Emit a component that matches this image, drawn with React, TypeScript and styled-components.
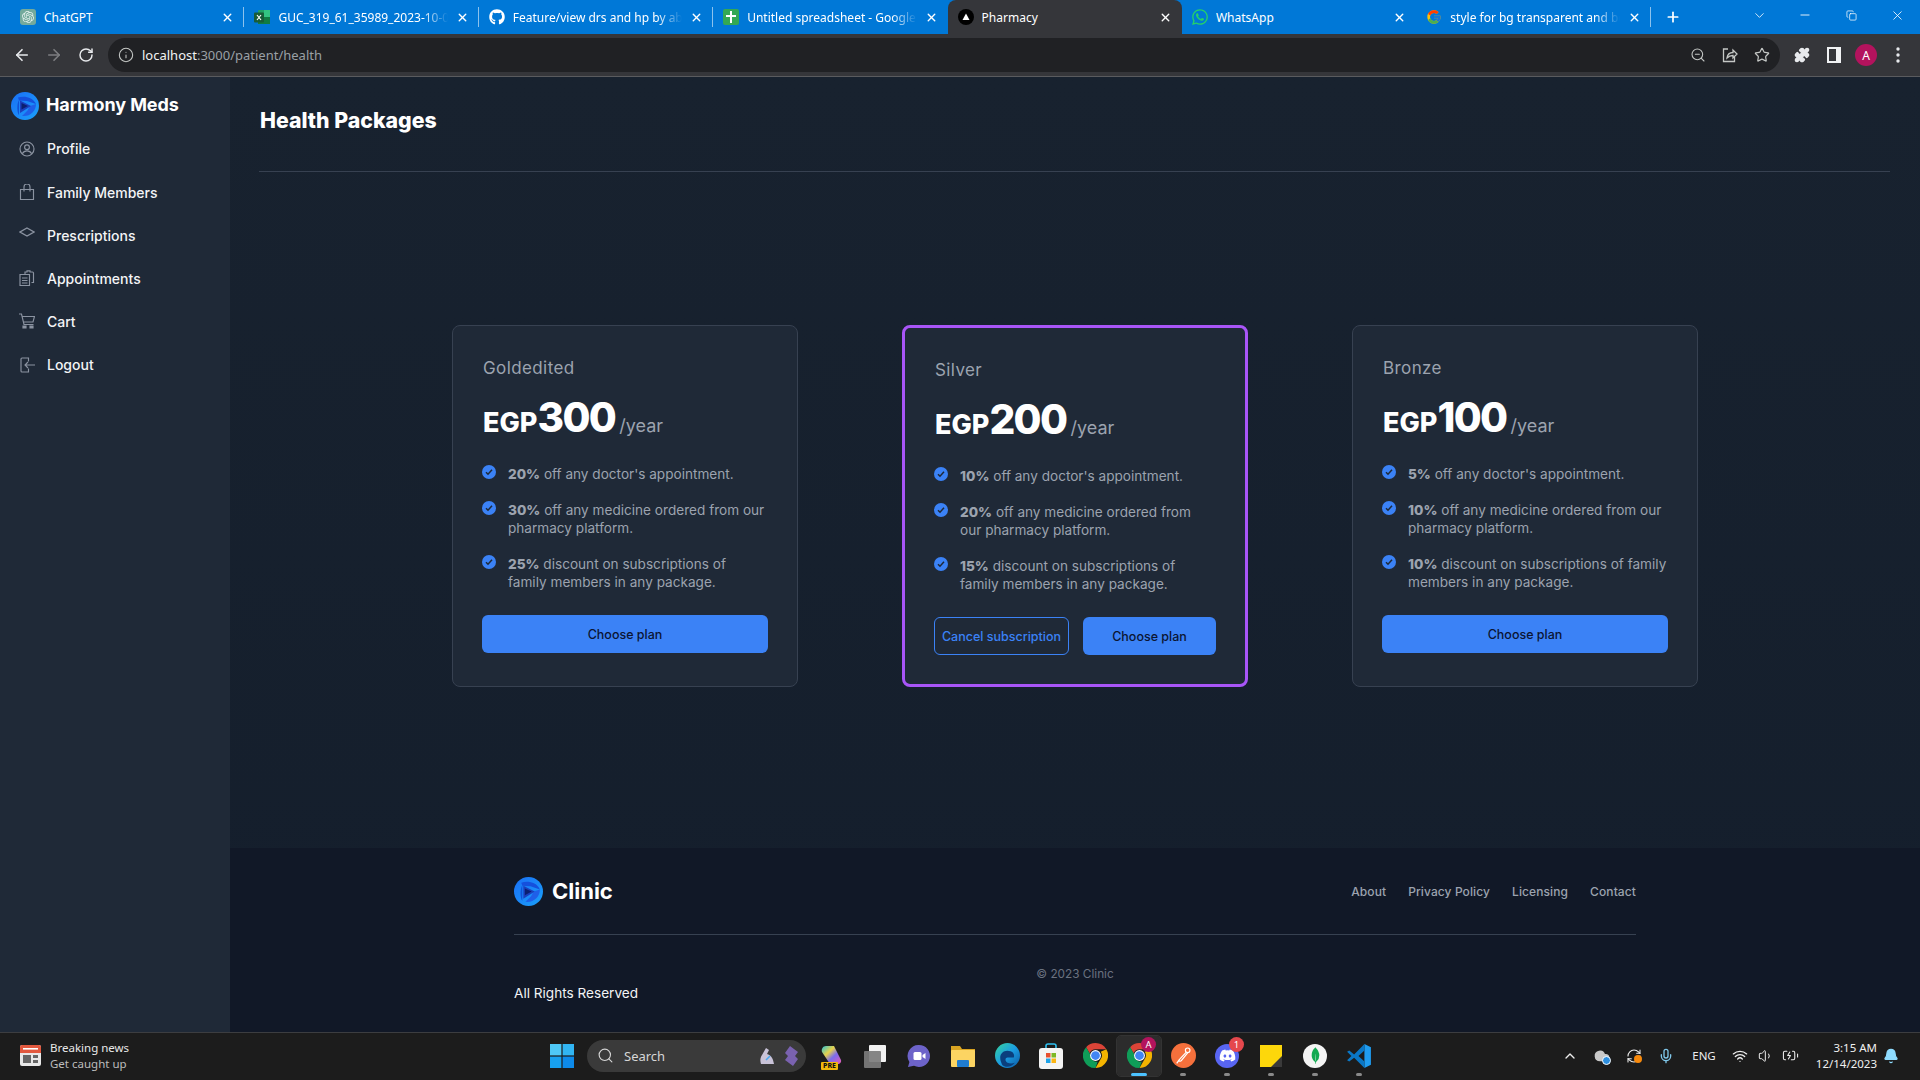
import React from "react";
import styled, { createGlobalStyle } from "styled-components";
import {
  ArrowLeft, ArrowRight, RotateCw, Info, ZoomOut, Star, Puzzle, X, Plus, ChevronDown, ChevronUp,
  Minus, Copy, Search, Mic, Wifi, Volume1, BatteryCharging, Bell, RefreshCw, Cloud,
} from "lucide-react";
import { FaGithub, FaWhatsapp, FaDiscord } from "react-icons/fa";
import { FcGoogle } from "react-icons/fc";
import { SiOpenai, SiMongodb } from "react-icons/si";

const UI = `"Inter", "Liberation Sans", sans-serif`;
const SYS = `"Noto Sans", "Open Sans", sans-serif`;

const Global = createGlobalStyle`
  html, body { margin: 0; padding: 0; background: #111827; overflow: hidden; }
  * { box-sizing: border-box; }
  #root { width: 1920px; height: 1080px; }
`;

const Screen = styled.div`
  width: 1920px; height: 1080px; display: flex; flex-direction: column; font-family: ${UI};
`;

/* Browser chrome */
const TabStrip = styled.div`
  height: 34px; flex: none; background: #0078d7; display: flex; padding-left: 10px; font-family: ${SYS};
`;
const Tab = styled.div<{ $active?: boolean; $sep?: boolean }>`
  position: relative; flex: 0 0 234.4px; width: 234.4px; height: 34px; display: flex; align-items: center; gap: 8px;
  padding: 0 10px; color: #fff; font-size: 12px;
  ${(p) => p.$active && `background: #35363a; border-radius: 8px 8px 0 0;`}
  ${(p) => p.$sep && `&::after { content: ""; position: absolute; right: 0; top: 7px; height: 20px; width: 1px; background: rgba(255,255,255,.55); }`}
`;
const TabIcon = styled.span`
  width: 16px; height: 16px; flex: none; display: flex; align-items: center; justify-content: center;
`;
const TabTitle = styled.span<{ $fade?: boolean }>`
  flex: 1; min-width: 0; white-space: nowrap; overflow: hidden;
  ${(p) => p.$fade && `mask-image: linear-gradient(90deg, #000 85%, transparent 100%);`}
`;
const TabClose = styled(X)`
  width: 13px; height: 13px; flex: none; color: #fff; stroke-width: 2.6;
`;
const GptFav = styled.span`
  width: 16px; height: 16px; border-radius: 3px; background: #74aa9c; color: #e8f3f0;
  display: flex; align-items: center; justify-content: center;
`;
const SheetFav = styled.span`
  width: 16px; height: 16px; border-radius: 2px; background: #34a853; color: #fff; position: relative; display: block;
  &::before { content: ""; position: absolute; left: 7px; top: 2px; width: 2px; height: 12px; background: #fff; }
  &::after { content: ""; position: absolute; left: 3px; top: 6px; width: 10px; height: 2px; background: #fff; }
`;
const NewTab = styled.span`
  width: 22px; height: 34px; margin-left: 11px; flex: none; display: flex; align-items: center; justify-content: center; color: #fff;
`;
const WindowControls = styled.div`
  margin-left: auto; display: flex; align-items: center; color: #fff; padding-bottom: 4px;
`;
const WinBtn = styled.span`
  width: 46px; height: 30px; display: flex; align-items: center; justify-content: center; color: #fff;
`;

const Toolbar = styled.div`
  height: 43px; flex: none; background: #35363a; border-bottom: 1px solid #5a5b5e; display: flex; align-items: center; padding: 0 6px;
`;
const NavBtn = styled.span<{ $dim?: boolean }>`
  width: 32px; height: 32px; flex: none; display: flex; align-items: center; justify-content: center;
  color: ${(p) => (p.$dim ? "#7d7e81" : "#e8eaed")};
`;
const Omnibox = styled.div`
  flex: 1; height: 34px; margin: 0 6px; border-radius: 17px; background: #202124; display: flex; align-items: center; padding: 0 2px 0 10px; gap: 8px;
`;
const Url = styled.div`
  flex: 1; font-family: ${SYS}; font-size: 13px; color: #9aa0a6; white-space: nowrap;
`;
const UrlHost = styled.span`color: #f1f3f4;`;
const OmniIcon = styled.span`
  width: 32px; height: 32px; margin-left: -8px; display: flex; align-items: center; justify-content: center; color: #c4c7c5;
`;
const Avatar = styled.span`
  width: 22px; height: 22px; border-radius: 50%; background: #b3135d; color: #fff; font-family: ${SYS}; font-size: 12px;
  display: flex; align-items: center; justify-content: center;
`;

/* App */
const Body = styled.div`flex: 1; min-height: 0; display: flex;`;
const Sidebar = styled.aside`
  width: 230px; flex: none; background: #1f2937; padding-top: 15px;
`;
const Brand = styled.div`
  display: flex; align-items: center; gap: 7px; padding-left: 11px; height: 28px; margin-bottom: 7.3px;
  color: #fff; font-size: 18px; font-weight: 700; letter-spacing: -.08px;
`;
const BrandName = styled.span`line-height: 26px; margin-bottom: 2px;`;
const NavItem = styled.div`
  height: 43.15px; display: flex; align-items: center; gap: 12px; padding-left: 19px;
  color: #f3f4f6; font-size: 14px; font-weight: 500; letter-spacing: 0;
`;
const NavIcon = styled.span`
  width: 16px; height: 16px; flex: none; color: #8b93a1; display: flex; align-items: center; justify-content: center;
`;
const DiamondIcon = styled(NavIcon)`transform: translateY(-3px);`;

const Main = styled.main`
  flex: 1; min-width: 0; display: flex; flex-direction: column;
  background: linear-gradient(180deg, #18222f 0%, #141e2c 100%);
`;
const PageHeader = styled.header`
  height: 95px; flex: none; margin: 0 30px 0 29px; padding-top: 27px; border-bottom: 1px solid #374151;
`;
const PageTitle = styled.h1`
  margin: 0; font-size: 21.3px; line-height: 32px; font-weight: 800; color: #fff; padding-left: 1px;
`;
const Plans = styled.section`
  flex: 1; display: flex; justify-content: center; align-items: flex-start; gap: 104px; padding-top: 153px;
`;
const Card = styled.article<{ $current?: boolean }>`
  width: 346px; height: 362px; flex: none; border-radius: 8px; background: #1f2937; padding: 30px 29px;
  border: ${(p) => (p.$current ? "3px solid #a855f7" : "1px solid #374151")};
  display: flex; flex-direction: column;
`;
const PlanName = styled.h3`
  margin: 0; font-size: 17px; line-height: 24px; font-weight: 400; color: #9ca3af; letter-spacing: .4px; padding-left: 1px;
`;
const Price = styled.div`
  margin-top: 8px; height: 60px; display: flex; align-items: baseline; color: #fff; font-weight: 800; padding-left: 1px;
`;
const Currency = styled.span`font-size: 27px; line-height: 60px;`;
const Amount = styled.span`font-size: 40.5px; line-height: 60px; letter-spacing: -1.6px;`;
const Period = styled.span`
  margin-left: 4px; font-size: 18px; font-weight: 400; color: #9ca3af;
`;
const Features = styled.ul<{ $narrow?: boolean }>`
  list-style: none; margin: 17px 0 0; padding: 0 ${(p) => (p.$narrow ? "8px" : "0")} 0 0; display: flex; flex-direction: column; gap: 18px;
`;
const Feature = styled.li`
  display: flex; gap: 12px; font-size: 13.6px; line-height: 18px; color: #9ca3af;
`;
const Check = styled.span`
  width: 14px; height: 14px; flex: none; border-radius: 50%; background: #3b82f6;
  display: flex; align-items: center; justify-content: center; color: #1f2937;
`;
const Bold = styled.strong`font-weight: 800;`;
const Actions = styled.div`
  margin-top: 24px; display: flex; gap: 14px;
`;
const Primary = styled.button`
  flex: 1; height: 38px; border: 0; border-radius: 6px; background: #3b82f6; color: #0b1533;
  font: 500 12.5px ${UI};
`;
const Outline = styled.button`
  flex: 1; height: 38px; border: 1px solid #3b82f6; border-radius: 6px; background: transparent; color: #3b82f6;
  font: 500 12.5px ${UI};
`;

const Footer = styled.footer`
  height: 184px; flex: none; background: #111827; padding-top: 29px;
`;
const FooterInner = styled.div`width: 1122px; margin: 0 auto;`;
const FooterTop = styled.div`
  display: flex; align-items: center; justify-content: space-between; height: 29px;
`;
const FooterBrand = styled.div`
  display: flex; align-items: center; gap: 9px; color: #fff; font-size: 22px; line-height: 27px; font-weight: 700;
`;
const FooterLinks = styled.nav`
  display: flex; gap: 22px; color: #9ca3af; font-size: 12px; font-weight: 500; letter-spacing: .1px;
`;
const Rule = styled.hr`
  border: 0; border-top: 1px solid #374151; margin: 28px 0 31px;
`;
const Copyright = styled.div`
  text-align: center; color: #6b7280; font-size: 11.8px; line-height: 16px;
`;
const Rights = styled.div`
  margin-top: 1px; color: #f3f4f6; font-size: 13.6px; line-height: 20px;
`;

/* Taskbar */
const Taskbar = styled.div`
  height: 48px; flex: none; background: #1c1c1c; border-top: 1px solid #3c3d40; display: flex; align-items: center; font-family: ${SYS}; padding-bottom: 2px;
`;
const News = styled.div`
  width: 540px; flex: none; display: flex; align-items: center; gap: 9px; padding-left: 20px; color: #e8e8e8;
`;
const NewsText = styled.div`font-size: 11.5px; line-height: 16px; white-space: nowrap;`;
const NewsSub = styled.div`color: #bdbdbd;`;
const TaskSlot = styled.span<{ $active?: boolean }>`
  position: relative; width: 44px; height: 40px; flex: none; display: flex; align-items: center; justify-content: center;
  ${(p) => p.$active && `background: #2c2c2c; border-radius: 4px; outline: 1px solid #333;`}
`;
const RunDot = styled.span<{ $on?: boolean }>`
  position: absolute; bottom: 0; left: 50%; height: 3px; border-radius: 2px;
  width: ${(p) => (p.$on ? "16px" : "6px")}; margin-left: ${(p) => (p.$on ? "-8px" : "-3px")};
  background: ${(p) => (p.$on ? "#4cc2ff" : "#8a8a8a")};
`;
const Badge = styled.span<{ $bg: string }>`
  position: absolute; top: 1px; right: 5px; width: 15px; height: 15px; border-radius: 50%; background: ${(p) => p.$bg};
  color: #fff; font-size: 9.5px; display: flex; align-items: center; justify-content: center;
`;
const SearchBox = styled.div`
  width: 219px; height: 32px; flex: none; margin: 0 3px; border-radius: 16px; background: #3a3a3a; color: #d6d6d6;
  display: flex; align-items: center; gap: 10px; padding-left: 10px; font-size: 13px;
`;
const SearchArt = styled.span`margin-left: auto; display: flex; margin-right: 7px; gap: 5px;`;
const Tray = styled.div`
  margin-left: auto; display: flex; align-items: center; color: #eee; padding-right: 16px;
`;
const TrayItem = styled.span<{ $w: number }>`
  position: relative; width: ${(p) => p.$w}px; flex: none; display: flex; align-items: center; justify-content: center; font-size: 11.5px;
`;
const SyncDot = styled.span`
  position: absolute; right: 8px; bottom: 1px; width: 8px; height: 8px; border-radius: 50%; background: #f7890c;
`;
const CloudDot = styled.span`
  position: absolute; right: 6px; bottom: -1px; width: 9px; height: 9px; border-radius: 50%; background: #2d8fe0; border: 1px solid #fff;
`;
const Clock = styled.div`
  width: 74px; text-align: right; font-size: 11.5px; line-height: 16px; color: #f0f0f0; white-space: nowrap;
`;
const PreTag = styled.span`
  position: absolute; bottom: 6px; left: 12px; padding: 0 2px; background: #f2b90c; color: #111; font-size: 7px; font-weight: 800; line-height: 8px; border-radius: 1px;
`;
const RoundIcon = styled.span<{ $bg: string }>`
  width: 24px; height: 24px; border-radius: 50%; background: ${(p) => p.$bg}; display: flex; align-items: center; justify-content: center;
`;

const Logo = ({ size, id }: { size: number; id: string }) => (
  <svg width={size} height={size} viewBox="0 0 28 28" style={{ flex: "none" }}>
    <defs>
      <linearGradient id={id} x1="0" y1="0" x2="1" y2="1">
        <stop offset="0" stopColor="#1a6ff5" />
        <stop offset="1" stopColor="#1aa0fb" />
      </linearGradient>
    </defs>
    <circle cx="14" cy="14" r="14" fill={`url(#${id})`} />
    <path d="M7 5.5 C13 3.5 22 5 25 12 L16 9 L8 8.5Z" fill="#1550dc" />
    <path d="M25 12 C25 19 19 25 11 24 L16.5 18.5 L19 14Z" fill="#1f5fe8" />
    <path d="M8 8 L8 23 C6 21 5.5 12 8 8Z" fill="#0f52d8" />
    <path d="M9 8.5 L20 14 L9 21Z" fill="#1b3fbd" />
    <path d="M10.5 11 L17 14 L10.5 17.5Z" fill="#0b1f70" />
  </svg>
);

const ExcelIcon = () => (
  <svg width="16" height="16" viewBox="0 0 16 16">
    <rect x="4" y="1" width="12" height="14" fill="#21a366" rx="1" />
    <rect x="10" y="1" width="6" height="7" fill="#33c481" />
    <rect x="4" y="8" width="12" height="7" fill="#107c41" />
    <rect x="0" y="3.5" width="10" height="10" fill="#185c37" rx="1" />
    <path d="M3 6l4 5M7 6l-4 5" stroke="#fff" strokeWidth="1.2" />
  </svg>
);
const NextFav = () => (
  <svg width="16" height="16" viewBox="0 0 16 16">
    <circle cx="8" cy="8" r="8" fill="#000" />
    <path d="M8 4.5 L11.5 11 H4.5Z" fill="#fff" />
  </svg>
);
const Chrome = () => (
  <svg width="25" height="25" viewBox="0 0 24 24">
    <path d="M12 0a12 12 0 0 1 10.4 6H12a6 6 0 0 0-5.6 3.8L3 4a12 12 0 0 1 9-4z" fill="#db4437" />
    <path d="M22.4 6A12 12 0 0 1 12 24l5-8.6A6 6 0 0 0 17 8.4z" fill="#f4b400" />
    <path d="M12 24A12 12 0 0 1 3 4l5 8.8a5 5 0 0 0 6 5.2z" fill="#0f9d58" />
    <circle cx="12" cy="12" r="5.2" fill="#fff" />
    <circle cx="12" cy="12" r="4.2" fill="#4285f4" />
  </svg>
);
const Windows = () => (
  <svg width="24" height="24" viewBox="0 0 24 24">
    <rect width="11.4" height="11.4" fill="#4fc8f7" />
    <rect x="12.6" width="11.4" height="11.4" fill="#31b5f3" />
    <rect y="12.6" width="11.4" height="11.4" fill="#17a0ef" />
    <rect x="12.6" y="12.6" width="11.4" height="11.4" fill="#0d8aea" />
  </svg>
);
const Copilot = () => (
  <svg width="24" height="24" viewBox="0 0 24 24">
    <defs>
      <linearGradient id="cop" x1="0" y1="0" x2="1" y2="1">
        <stop offset="0" stopColor="#2bc4d8" /><stop offset=".35" stopColor="#e8d24a" /><stop offset=".6" stopColor="#7b6cf0" /><stop offset="1" stopColor="#e85ab0" />
      </linearGradient>
    </defs>
    <path d="M7 2h8l7 14c.6 2-1 4-3 4h-8L3 8C2 5 4 2 7 2z" fill="url(#cop)" />
  </svg>
);
const TaskView = () => (
  <svg width="24" height="24" viewBox="0 0 24 24">
    <rect x="6" y="1" width="17" height="17" rx="1" fill="#f2f2f2" />
    <rect x="1" y="7" width="17" height="17" rx="1" fill="#7c7c7c" opacity=".92" />
  </svg>
);
const Teams = () => (
  <svg width="24" height="24" viewBox="0 0 24 24">
    <path d="M12 1a11 11 0 1 1-5 20.8L1 23l1.4-5A11 11 0 0 1 12 1z" fill="#6d63c9" />
    <rect x="6.5" y="8" width="8" height="8" rx="1.5" fill="#fff" />
    <path d="M15.5 11l3-2v6l-3-2z" fill="#fff" />
  </svg>
);
const Folder = () => (
  <svg width="24" height="24" viewBox="0 0 24 24">
    <path d="M0 2h9l2 3h13v3H0z" fill="#d9a422" />
    <rect y="6" width="24" height="17" rx="1" fill="#fcd462" />
    <rect x="6" y="16" width="12" height="7" rx="1" fill="#1f7cd0" />
  </svg>
);
const Edge = () => (
  <svg width="25" height="25" viewBox="0 0 24 24">
    <defs>
      <linearGradient id="edg" x1="0" y1="0" x2="1" y2="1">
        <stop offset="0" stopColor="#37d59c" /><stop offset=".5" stopColor="#1b9de2" /><stop offset="1" stopColor="#0c59a4" />
      </linearGradient>
    </defs>
    <circle cx="12" cy="12" r="12" fill="url(#edg)" />
    <path d="M5 14c0-5 5-8 10-6 3 1 4 4 3 6h-6c-2 0-3 3 0 5 2 1 5 1 7 0-3 4-9 5-12 2-1-2-2-4-2-7z" fill="#0b3f7d" />
  </svg>
);
const Store = () => (
  <svg width="24" height="26" viewBox="0 0 24 26">
    <path d="M7 6V3a2 2 0 0 1 2-2h6a2 2 0 0 1 2 2v3" fill="none" stroke="#2fc0f0" strokeWidth="1.6" />
    <rect y="5" width="24" height="21" rx="3" fill="#f4f4f4" />
    <rect x="7" y="10" width="4.5" height="4.5" fill="#e8502f" />
    <rect x="12.5" y="10" width="4.5" height="4.5" fill="#7db928" />
    <rect x="7" y="15.5" width="4.5" height="4.5" fill="#1fa3e8" />
    <rect x="12.5" y="15.5" width="4.5" height="4.5" fill="#fbb514" />
  </svg>
);
const Sticky = () => (
  <svg width="24" height="24" viewBox="0 0 24 24">
    <path d="M1 1h22v12L13 23H1z" fill="#fdd70b" />
    <path d="M23 12v11H12z" fill="#3a3a3a" />
  </svg>
);
const VSCode = () => (
  <svg width="26" height="26" viewBox="0 0 24 24">
    <path d="M17 1l6 3v16l-6 3z" fill="#1f9cf0" />
    <path d="M17 1L7.5 10.5 3 7 1 8l4 4-4 4 2 1 4.5-3.5L17 23v-6l-5.5-5L17 7z" fill="#0a77c6" />
  </svg>
);
const Postman = () => (
  <svg width="25" height="25" viewBox="0 0 24 24">
    <circle cx="12" cy="12" r="12" fill="#f5703c" />
    <circle cx="16" cy="7" r="2.2" fill="none" stroke="#fff" strokeWidth="1.1" />
    <path d="M14.5 9L8 16M16 9.5L9.5 17.5M8 16l-2.5 3.5M9.5 17.5H7" stroke="#fff" strokeWidth="1.2" fill="none" />
  </svg>
);
const Microscope = () => (
  <svg width="18" height="22" viewBox="0 0 18 22">
    <path d="M3 19h13c-1-6-3-9-7-10l2-4-3-2-4 7c-2 3-2 6-1 9z" fill="#c9c3d8" />
    <path d="M8 15l4-4" stroke="#4aa8f0" strokeWidth="1.6" />
  </svg>
);
const Satellite = () => (
  <svg width="18" height="22" viewBox="0 0 18 22">
    <path d="M9 1l8 6-3 4 3 3-5 7-8-6 3-4-3-3z" fill="#7a62b0" />
  </svg>
);
const NewsIcon = () => (
  <svg width="21" height="21" viewBox="0 0 21 21">
    <rect width="21" height="21" rx="2" fill="#e8e8e8" />
    <path d="M0 2a2 2 0 0 1 2-2h17a2 2 0 0 1 2 2v6H0z" fill="#e2583e" />
    <rect x="3" y="3" width="15" height="1.6" fill="#fff" />
    <rect x="3" y="10" width="8" height="8" fill="#666" />
    <rect x="13" y="10" width="5" height="3" fill="#666" />
    <rect x="13" y="15" width="5" height="3" fill="#666" />
  </svg>
);
const ShareIcon = () => (
  <svg width="16" height="16" viewBox="0 0 16 16" fill="none" stroke="currentColor" strokeWidth="1.3">
    <path d="M6 2H1.5v12.5h11V10" />
    <path d="M5 11c.5-4 3-5.5 6-5.5V3l4 4-4 4V8.5c-3 0-4.5 1-6 2.5z" />
  </svg>
);
const SideSvg = ({ children }: { children: React.ReactNode }) => (
  <svg width="16" height="16" viewBox="0 0 16 16" fill="none" stroke="currentColor" strokeWidth="1.15">{children}</svg>
);
const IconProfile = () => (
  <SideSvg>
    <circle cx="8" cy="8" r="7" />
    <circle cx="8" cy="6.2" r="2.4" />
    <path d="M3.3 12.8c1-2 2.6-3 4.7-3s3.700 1 4.700 3" />
  </SideSvg>
);
const IconBag = () => (
  <SideSvg>
    <path d="M1.500 5.500h13v10h-13z" />
    <path d="M5 7.500V3a3 3 0 0 1 6 0v4.500" />
  </SideSvg>
);
const IconDiamond = () => (
  <SideSvg>
    <path d="M8 4l7 4-7 4-7-4z" strokeWidth="1.4" />
  </SideSvg>
);
const IconClipboards = () => (
  <SideSvg>
    <path d="M1 4.500h9.500v11H1z" />
    <path d="M4 4.500V2h2V.8h3V2h2.500a1 1 0 0 1 1 1v9.500h-2" transform="translate(2 0)" />
    <path d="M3 8h5.500M3 10.500h5.500M3 13h5.500" />
  </SideSvg>
);
const IconCart = () => (
  <SideSvg>
    <path d="M0 1h2.500l2.500 10.500h9.500M3.500 3.500H15.500l-1.500 5.500H4.500" />
    <path d="M4 13h3v2H4zM11 13h3v2h-3z" fill="currentColor" />
  </SideSvg>
);
const IconLogout = () => (
  <SideSvg>
    <path d="M9.500 4.500V1H3a1 1 0 0 0-1 1v12a1 1 0 0 0 1 1h6.500v-3.500" />
    <path d="M16 8H6M9 5L6 8l3 3" />
  </SideSvg>
);
const CheckMark = () => (
  <svg width="8" height="8" viewBox="0 0 8 8" fill="none" stroke="currentColor" strokeWidth="1.5">
    <path d="M1 4.200l2 2L7 1.800" />
  </svg>
);

const tabs = [
  { title: "ChatGPT", icon: <GptFav><SiOpenai size={12} /></GptFav>, sep: true },
  { title: "GUC_319_61_35989_2023-10-01", icon: <ExcelIcon />, sep: true, fade: true },
  { title: "Feature/view drs and hp by abdelrahman", icon: <FaGithub size={16} color="#fff" />, sep: true, fade: true },
  { title: "Untitled spreadsheet - Google Sheets", icon: <SheetFav />, fade: true },
  { title: "Pharmacy", icon: <NextFav />, active: true },
  { title: "WhatsApp", icon: <FaWhatsapp size={18} color="#25d366" /> },
  { title: "style for bg transparent and border", icon: <FcGoogle size={18} />, sep: true, fade: true },
];

const nav = [
  { label: "Profile", icon: <NavIcon><IconProfile /></NavIcon> },
  { label: "Family Members", icon: <NavIcon><IconBag /></NavIcon> },
  { label: "Prescriptions", icon: <DiamondIcon><IconDiamond /></DiamondIcon> },
  { label: "Appointments", icon: <NavIcon><IconClipboards /></NavIcon> },
  { label: "Cart", icon: <NavIcon><IconCart /></NavIcon> },
  { label: "Logout", icon: <NavIcon><IconLogout /></NavIcon> },
];

const plans = [
  { name: "Goldedited", price: "300", f: [["20%", " off any doctor's appointment."], ["30%", " off any medicine ordered from our pharmacy platform."], ["25%", " discount on subscriptions of family members in any package."]] },
  { name: "Silver", price: "200", current: true, f: [["10%", " off any doctor's appointment."], ["20%", " off any medicine ordered from our pharmacy platform."], ["15%", " discount on subscriptions of family members in any package."]] },
  { name: "Bronze", price: "100", f: [["5%", " off any doctor's appointment."], ["10%", " off any medicine ordered from our pharmacy platform."], ["10%", " discount on subscriptions of family members in any package."]] },
];

const apps = [
  { el: <Copilot />, extra: <PreTag>PRE</PreTag> },
  { el: <TaskView /> },
  { el: <Teams /> },
  { el: <Folder /> },
  { el: <Edge /> },
  { el: <Store /> },
  { el: <Chrome /> },
  { el: <Chrome />, active: true, run: true, on: true, extra: <Badge $bg="#b3135d">A</Badge> },
  { el: <Postman />, run: true },
  { el: <RoundIcon $bg="#5865f2"><FaDiscord size={17} color="#fff" /></RoundIcon>, run: true, extra: <Badge $bg="#e5484d">1</Badge> },
  { el: <Sticky />, run: true },
  { el: <RoundIcon $bg="#f4f4f4"><SiMongodb size={17} color="#13aa52" /></RoundIcon>, run: true },
  { el: <VSCode />, run: true },
];

export default function App() {
  return (
    <Screen>
      <Global />
      <TabStrip>
        {tabs.map((t) => (
          <Tab key={t.title} $active={t.active} $sep={t.sep}>
            <TabIcon>{t.icon}</TabIcon>
            <TabTitle $fade={t.fade}>{t.title}</TabTitle>
            <TabClose />
          </Tab>
        ))}
        <NewTab><Plus size={16} strokeWidth={2.6} /></NewTab>
        <WindowControls>
          <WinBtn><ChevronDown size={15} strokeWidth={1.3} /></WinBtn>
          <WinBtn><Minus size={14} strokeWidth={1.5} /></WinBtn>
          <WinBtn><Copy size={11} strokeWidth={1.6} /></WinBtn>
          <WinBtn><X size={15} strokeWidth={1.3} /></WinBtn>
        </WindowControls>
      </TabStrip>
      <Toolbar>
        <NavBtn><ArrowLeft size={18} strokeWidth={2.2} /></NavBtn>
        <NavBtn $dim><ArrowRight size={18} strokeWidth={2.2} /></NavBtn>
        <NavBtn><RotateCw size={16} strokeWidth={2.2} /></NavBtn>
        <Omnibox>
          <Info size={16} color="#c4c7c5" strokeWidth={1.6} />
          <Url><UrlHost>localhost</UrlHost>:3000/patient/health</Url>
          <OmniIcon><ZoomOut size={16} strokeWidth={1.6} /></OmniIcon>
          <OmniIcon><ShareIcon /></OmniIcon>
          <OmniIcon><Star size={16} strokeWidth={1.8} /></OmniIcon>
        </Omnibox>
        <NavBtn><Puzzle size={16} fill="#e8eaed" /></NavBtn>
        <NavBtn><svg width="14" height="16" viewBox="0 0 14 16"><path d="M0 0h14v16H0zM2 2v12h7V2z" fill="#f1f3f4" fillRule="evenodd" /></svg></NavBtn>
        <NavBtn><Avatar>A</Avatar></NavBtn>
        <NavBtn><svg width="4" height="16" viewBox="0 0 4 16"><circle cx="2" cy="2" r="1.7" fill="#e8eaed" /><circle cx="2" cy="8" r="1.7" fill="#e8eaed" /><circle cx="2" cy="14" r="1.7" fill="#e8eaed" /></svg></NavBtn>
      </Toolbar>
      <Body>
        <Sidebar>
          <Brand><Logo size={28} id="lg1" /><BrandName>Harmony Meds</BrandName></Brand>
          {nav.map((n) => (
            <NavItem key={n.label}>{n.icon}{n.label}</NavItem>
          ))}
        </Sidebar>
        <Main>
          <PageHeader><PageTitle>Health Packages</PageTitle></PageHeader>
          <Plans>
            {plans.map((p) => (
              <Card key={p.name} $current={p.current}>
                <PlanName>{p.name}</PlanName>
                <Price>
                  <Currency>EGP</Currency>
                  <Amount>{p.price}</Amount>
                  <Period>/year</Period>
                </Price>
                <Features $narrow={p.current}>
                  {p.f.map(([b, t]) => (
                    <Feature key={b + t}>
                      <Check><CheckMark /></Check>
                      <span><Bold>{b}</Bold>{t}</span>
                    </Feature>
                  ))}
                </Features>
                <Actions>
                  {p.current && <Outline>Cancel subscription</Outline>}
                  <Primary>Choose plan</Primary>
                </Actions>
              </Card>
            ))}
          </Plans>
          <Footer>
            <FooterInner>
              <FooterTop>
                <FooterBrand><Logo size={29} id="lg2" />Clinic</FooterBrand>
                <FooterLinks>
                  <span>About</span><span>Privacy Policy</span><span>Licensing</span><span>Contact</span>
                </FooterLinks>
              </FooterTop>
              <Rule />
              <Copyright>© 2023 Clinic</Copyright>
              <Rights>All Rights Reserved</Rights>
            </FooterInner>
          </Footer>
        </Main>
      </Body>
      <Taskbar>
        <News>
          <NewsIcon />
          <NewsText>Breaking news<NewsSub>Get caught up</NewsSub></NewsText>
        </News>
        <TaskSlot><Windows /></TaskSlot>
        <SearchBox>
          <Search size={17} strokeWidth={1.6} />Search
          <SearchArt><Microscope /><Satellite /></SearchArt>
        </SearchBox>
        {apps.map((a, i) => (
          <TaskSlot key={i} $active={a.active}>
            {a.el}
            {a.extra}
            {a.run && <RunDot $on={a.on} />}
          </TaskSlot>
        ))}
        <Tray>
          <TrayItem $w={32}><ChevronUp size={16} /></TrayItem>
          <TrayItem $w={31}><Cloud size={16} fill="#c9c9c9" color="#c9c9c9" /><CloudDot /></TrayItem>
          <TrayItem $w={33}><RefreshCw size={16} strokeWidth={1.6} /><SyncDot /></TrayItem>
          <TrayItem $w={32}><Mic size={16} color="#7fc6e8" /></TrayItem>
          <TrayItem $w={44}>ENG</TrayItem>
          <TrayItem $w={28}><Wifi size={16} /></TrayItem>
          <TrayItem $w={23}><Volume1 size={16} strokeWidth={1.5} /></TrayItem>
          <TrayItem $w={26}><BatteryCharging size={17} strokeWidth={1.5} /></TrayItem>
          <Clock>3:15 AM<br />12/14/2023</Clock>
          <TrayItem $w={27}><Bell size={16} fill="#8fdcff" color="#8fdcff" /></TrayItem>
        </Tray>
      </Taskbar>
    </Screen>
  );
}
